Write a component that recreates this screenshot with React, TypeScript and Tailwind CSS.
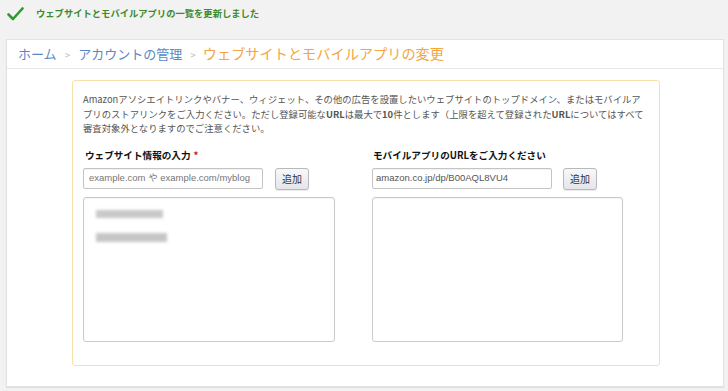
import React from "react";

const JP = { fontFamily: '"Noto Sans CJK JP", "Noto Sans", sans-serif' };
const INPUT = { fontFamily: '"Liberation Sans", "Noto Sans CJK JP", sans-serif' };

function Check() {
  return (
    <svg width="17" height="14" viewBox="0 0 17 14" fill="none">
      <path d="M1.5 7.5 L6 12 L15.5 1.5" stroke="#2f9a2f" strokeWidth="2.6" strokeLinecap="round" strokeLinejoin="round" />
    </svg>
  );
}

function AddButton() {
  return (
    <button className="w-[34px] h-[22px] rounded-[3px] border border-[#b5b8bd] bg-gradient-to-b from-[#f7f8fa] to-[#e4e6ea] text-[10px] text-[#333] flex items-center justify-center shadow-[0_1px_0_rgba(0,0,0,0.08)]">
      追加
    </button>
  );
}

export default function App() {
  return (
    <div className="w-[728px] h-[391px] bg-[#f2f2f2] overflow-hidden" style={JP}>
      <div className="h-[28px] flex items-center pl-[7px]">
        <Check />
        <span className="ml-[12px] text-[9.3px] font-bold text-[#3b8a2c] whitespace-nowrap">
          ウェブサイトとモバイルアプリの一覧を更新しました
        </span>
      </div>
      <div className="mt-[11px] ml-[6px] w-[718px] h-[348px] bg-white border border-[#e2e2e2] shadow-[0_1px_1px_rgba(0,0,0,0.08)]">
        <div className="h-[29px] border-b border-[#e6e6e6] flex items-center pl-[11px] whitespace-nowrap">
          <span className="text-[13px] text-[#5a87c6]">ホーム</span>
          <span className="mx-[8px] text-[10px] text-[#bdbdbd]">&gt;</span>
          <span className="text-[13px] text-[#5a87c6]">アカウントの管理</span>
          <span className="ml-[8px] mr-[7px] text-[10px] text-[#bdbdbd]">&gt;</span>
          <span className="text-[14.2px] text-[#f4a540]">ウェブサイトとモバイルアプリの変更</span>
        </div>
        <div className="pt-[11px] pl-[65px]">
          <div className="w-[588px] h-[286px] border border-[#f6dfaa] rounded-[3px] pl-[10px] pt-[11px]">
            <p className="text-[9.35px] leading-[14.5px] text-[#555] whitespace-nowrap">
              Amazonアソシエイトリンクやバナー、ウィジェット、その他の広告を設置したいウェブサイトのトップドメイン、またはモバイルア
              <br />
              プリのストアリンクをご入力ください。ただし登録可能な<span className="font-semibold">URL</span>は最大で<span className="font-semibold">10</span>件とします（上限を超えて登録された<span className="font-semibold">URL</span>についてはすべて
              <br />
              審査対象外となりますのでご注意ください。
            </p>
            <div className="mt-[12px] flex">
              <div className="w-[289px]">
                <div className="h-[14px] pl-[2px] text-[9.6px] leading-[14px] font-bold text-[#111] whitespace-nowrap">
                  ウェブサイト情報の入力<span className="ml-[3px] text-[#c8102e]">*</span>
                </div>
                <div className="mt-[6px] flex items-center">
                  <div className="w-[180px] shrink-0 h-[21px] border border-[#c4c4c4] rounded-[2px] flex items-center pl-[5px] text-[9.5px] text-[#777] whitespace-nowrap overflow-hidden shadow-[inset_0_1px_1px_rgba(0,0,0,0.06)]" style={INPUT}>
                    example.com や example.com/myblog
                  </div>
                  <div className="ml-[12px]">
                    <AddButton />
                  </div>
                </div>
                <div className="mt-[7px] w-[252px] h-[145px] border border-[#cacaca] rounded-[3px] pl-[12px] pt-[12px] shadow-[inset_0_1px_1px_rgba(0,0,0,0.05)]">
                  <div className="w-[67px] h-[8px] bg-[#c9c9c9] blur-[1.5px]" />
                  <div className="mt-[15px] w-[71px] h-[9px] bg-[#c6c6c6] blur-[1.5px]" />
                </div>
              </div>
              <div className="w-[260px]">
                <div className="h-[14px] pl-[1px] text-[9.6px] leading-[14px] font-bold text-[#111] whitespace-nowrap">
                  モバイルアプリのURLをご入力ください
                </div>
                <div className="mt-[6px] flex items-center">
                  <div className="w-[180px] shrink-0 h-[21px] border border-[#c4c4c4] rounded-[2px] flex items-center pl-[3px] text-[9.5px] text-[#555] whitespace-nowrap overflow-hidden shadow-[inset_0_1px_1px_rgba(0,0,0,0.06)]" style={INPUT}>
                    amazon.co.jp/dp/B00AQL8VU4
                  </div>
                  <div className="ml-[11px]">
                    <AddButton />
                  </div>
                </div>
                <div className="mt-[7px] w-[251px] h-[145px] border border-[#cacaca] rounded-[3px] shadow-[inset_0_1px_1px_rgba(0,0,0,0.05)]" />
              </div>
            </div>
          </div>
        </div>
      </div>
    </div>
  );
}
